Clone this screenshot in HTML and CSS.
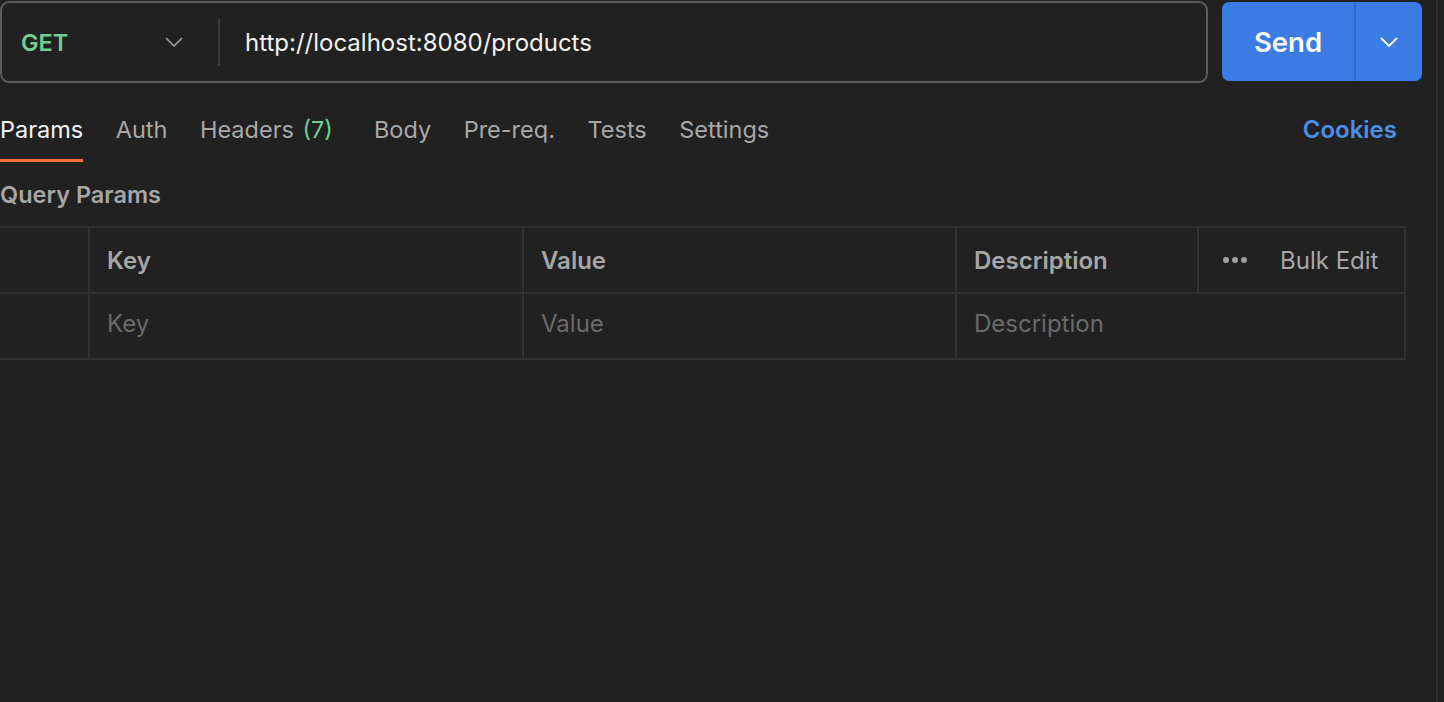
FILE: index.html
```html
<!DOCTYPE html>
<html>
<head>
<meta charset="utf-8">
<link rel="stylesheet" href="styles.css">
</head>
<body>
<div class="app">
  <div class="main">
    <div class="request-row">
      <div class="url-box">
        <div class="method">
          <span class="method-name">GET</span>
          <svg class="chev" width="18" height="10" viewBox="0 0 18 10"><path d="M1 1 L9 9 L17 1" fill="none" stroke="#a0a0a0" stroke-width="1.6"/></svg>
        </div>
        <div class="url-divider"></div>
        <div class="url-text">http://localhost:8080/products</div>
      </div>
      <div class="send">
        <div class="send-main">Send</div>
        <div class="send-drop">
          <svg width="18" height="10" viewBox="0 0 18 10"><path d="M1 1 L9 9 L17 1" fill="none" stroke="#ffffff" stroke-width="1.8"/></svg>
        </div>
      </div>
    </div>
    <div class="tabs">
      <div class="tab active">Params</div>
      <div class="tab">Auth</div>
      <div class="tab tab-headers">Headers <span class="count">(7)</span></div>
      <div class="tab">Body</div>
      <div class="tab">Pre-req.</div>
      <div class="tab">Tests</div>
      <div class="tab">Settings</div>
      <div class="spacer"></div>
      <div class="cookies">Cookies</div>
    </div>
    <div class="section-title">Query Params</div>
    <div class="table">
      <div class="row head">
        <div class="cell c-check"></div>
        <div class="cell c-key">Key</div>
        <div class="cell c-val">Value</div>
        <div class="cell c-desc">Description</div>
        <div class="cell c-bulk">
          <span class="dots"><i></i><i></i><i></i></span>
          <span class="bulk">Bulk Edit</span>
        </div>
      </div>
      <div class="row body">
        <div class="cell c-check"></div>
        <div class="cell c-key ph">Key</div>
        <div class="cell c-val ph">Value</div>
        <div class="cell c-desc-wide ph">Description</div>
      </div>
    </div>
  </div>
  <div class="side"></div>
</div>
</body>
</html>
```

FILE: styles.css
```css
* { box-sizing: border-box; }
html, body {
  margin: 0;
  padding: 0;
  background: #212121;
  font-family: Inter, "Noto Sans", sans-serif;
  color: #e6e6e6;
  height: 100%;
  overflow: hidden;
}
.app {
  display: flex;
  height: 702px;
  width: 1444px;
}
.main {
  width: 1436px;
  display: flex;
  flex-direction: column;
}
.side {
  width: 2px;
  background: #2e2e2e;
}
.request-row {
  display: flex;
  align-items: flex-start;
  padding-top: 1px;
  height: 84px;
}
.url-box {
  width: 1208px;
  height: 82px;
  border: 2px solid #5c5c5c;
  border-radius: 9px;
  display: flex;
  align-items: center;
  background: #212121;
}
.method {
  width: 216px;
  display: flex;
  align-items: center;
  padding-left: 19px;
  padding-right: 35px;
}
.method-name {
  color: #6fcf8e;
  font-weight: 600;
  font-size: 23.5px;
  flex: 1;
}
.url-divider {
  width: 2px;
  height: 47px;
  background: #3c3c3c;
}
.url-text {
  margin-left: 25px;
  font-size: 24px;
  color: #f2f2f2;
}
.send {
  margin-left: 14px;
  margin-top: 1px;
  width: 200px;
  height: 79px;
  background: #3a7be4;
  border-radius: 7px;
  display: flex;
  color: #fff;
}
.send-main {
  width: 134px;
  display: flex;
  align-items: center;
  justify-content: center;
  font-size: 27.5px;
  font-weight: 600;
  border-right: 2px solid #2f6bc9;
}
.send-drop {
  flex: 1;
  display: flex;
  align-items: center;
  justify-content: center;
}
.tabs {
  display: flex;
  align-items: flex-start;
  height: 78px;
  padding-right: 39px;
}
.tab {
  font-size: 23.5px;
  color: #a8a8a8;
  margin-right: 32.5px;
  height: 78px;
  padding-top: 31px;
  line-height: 29px;
}
.tab.active {
  color: #f4f4f4;
  position: relative;
}
.tab.active::after {
  content: "";
  position: absolute;
  left: 0;
  right: 0;
  top: 75px;
  height: 3px;
  background: #f2703a;
}
.tab-headers { margin-right: 41px; }
.count { color: #6fcf8e; margin-left: 2px; }
.spacer { flex: 1; }
.cookies {
  font-size: 24px;
  color: #4a8fe6;
  font-weight: 600;
  padding-top: 31px;
  line-height: 29px;
}
.section-title {
  font-size: 23.5px;
  font-weight: 600;
  color: #a6a6a6;
  height: 64px;
  line-height: 29px;
  padding-top: 18px;
}
.table {
  width: 1406px;
  border-top: 2px solid #313131;
  border-right: 2px solid #313131;
}
.row {
  display: flex;
  height: 66px;
  border-bottom: 2px solid #313131;
}
.cell {
  display: flex;
  align-items: center;
  font-size: 24px;
  padding-left: 17px;
  border-right: 2px solid #313131;
}
.body .cell { padding-bottom: 6px; }
.head .cell { color: #a6a6a6; font-weight: 600; }
.c-check { width: 90px; }
.c-key { width: 434px; }
.c-val { width: 433px; }
.c-desc { width: 242px; }
.c-desc-wide { flex: 1; border-right: none; }
.c-bulk { flex: 1; border-right: none; padding-left: 24px; }
.head .c-bulk { font-weight: 400; color: #a0a0a0; }
.ph { color: #6a6a6a; }
.dots { display: flex; gap: 3px; margin-right: 33px; }
.dots i { width: 6px; height: 6px; border-radius: 50%; background: #a0a0a0; display: block; }
.bulk { color: #a6a6a6; }
```
